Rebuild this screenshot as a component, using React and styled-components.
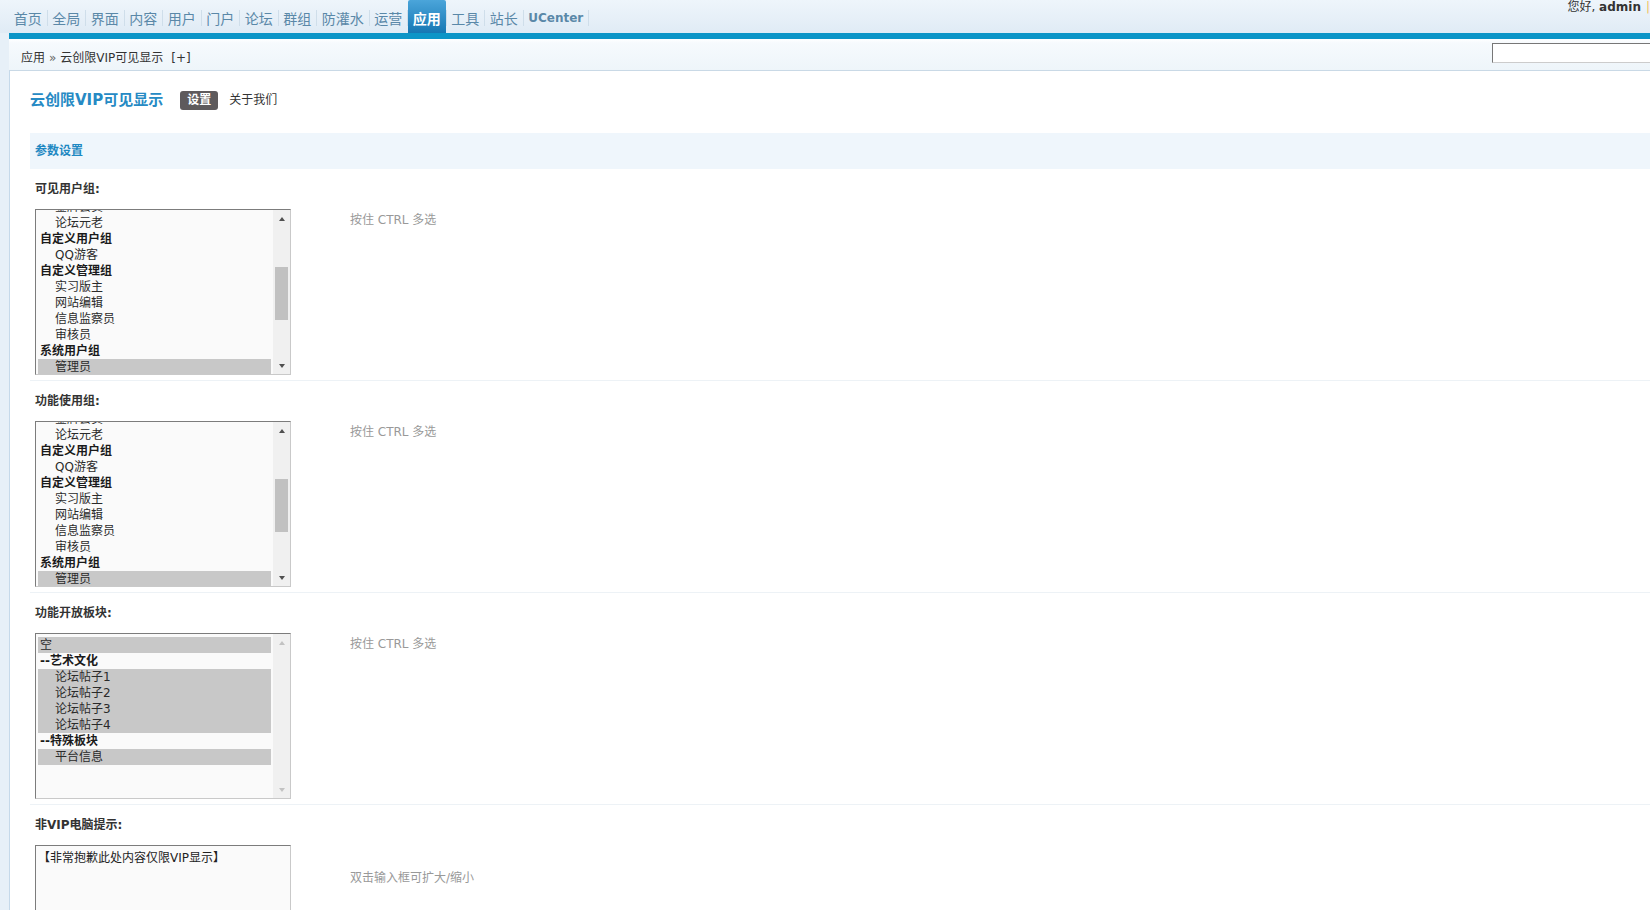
import React from 'react';
import styled, { createGlobalStyle, css } from 'styled-components';

const FONT = `"DejaVu Sans", "Noto Sans CJK SC", sans-serif`;
const CJK = `"Noto Sans CJK SC", "DejaVu Sans", sans-serif`;

const GlobalStyle = createGlobalStyle`
  html, body { margin: 0; padding: 0; }
  body {
    width: 1650px;
    height: 910px;
    overflow: hidden;
    background: #e7f0f8;
    font: 12px/1.5 ${FONT};
    color: #333;
  }
  *, *::before, *::after { box-sizing: border-box; }
`;

const Page = styled.div`
  display: flex;
  flex-direction: column;
  height: 910px;
  overflow: hidden;
`;

const Header = styled.header`
  display: flex;
  flex: none;
  height: 33px;
  padding-left: 9px;
  background: linear-gradient(to bottom, #eef5fb, #e0ebf5);
`;

const Nav = styled.nav`
  display: flex;
  height: 100%;
`;

const NavItem = styled.a`
  display: flex;
  align-items: center;
  height: 33px;
  padding: 2px 4.75px 0;
  font: 14px/1 ${CJK};
  color: #5a88a8;
  text-decoration: none;
  white-space: nowrap;
  ${(p) =>
    p.$latin &&
    css`
      font: bold 12px/1 ${FONT};
    `}
  ${(p) =>
    p.$active &&
    css`
      background: linear-gradient(to bottom, #4ba5da, #1677b3);
      color: #fff;
      font-weight: bold;
      border-radius: 2px 2px 0 0;
    `}
`;

const NavSep = styled.span`
  width: 1px;
  height: 16px;
  align-self: center;
  margin-top: 3px;
  background: #cfdeea;
`;

const UserInfo = styled.div`
  margin-left: auto;
  line-height: 14px;
  white-space: nowrap;
  color: #333;
  b { font-weight: bold; }
`;

const Pipe = styled.span`
  color: #f2c15b;
  margin-left: 5px;
`;

const Frame = styled.div`
  flex: 1;
  min-height: 0;
  margin-left: 9px;
  display: flex;
  flex-direction: column;
`;

const BlueBar = styled.div`
  flex: none;
  height: 6px;
  background: #0c95c7;
`;

const Crumbs = styled.div`
  flex: none;
  display: flex;
  align-items: flex-start;
  height: 32px;
  padding: 3px 0 0 12px;
  background: linear-gradient(to bottom, #ffffff 0, #f6fafd 4px, #eef5fa 100%);
  border-bottom: 1px solid #c9d9e6;
`;

const CrumbText = styled.div`
  line-height: 28px;
  padding-top: 2px;
  white-space: nowrap;
  color: #333;
`;

const Raquo = styled.span`
  color: #666;
  margin: 0 4px;
`;

const Expand = styled.span`
  margin-left: 8px;
  color: #333;
`;

const SearchInput = styled.input`
  margin: 1px -12px 0 auto;
  width: 170px;
  height: 20px;
  padding: 0 3px;
  border: 1px solid;
  border-color: #777 #ccc #ccc #777;
  background: #fff;
  outline: none;
`;

const Main = styled.main`
  flex: 1;
  min-height: 0;
  overflow: hidden;
  background: #fff;
  border-left: 1px solid #c5d9ea;
  padding-left: 20px;
`;

const TitleRow = styled.div`
  display: flex;
  align-items: center;
  height: 20px;
  margin-top: 19px;
`;

const Title = styled.h3`
  margin: 0 17px 0 0;
  font: bold 15px/20px ${FONT};
  color: #268ac4;
  white-space: nowrap;
`;

const Pill = styled.span`
  height: 19px;
  line-height: 19px;
  padding: 0 7px;
  background: #5e5a5c;
  color: #fff;
  font-weight: bold;
  border-radius: 3px;
  margin-right: 11px;
`;

const TabLink = styled.span`
  color: #333;
`;

const SectionHead = styled.div`
  margin-top: 23px;
  height: 36px;
  line-height: 36px;
  padding-left: 5px;
  background: #eff6fc;
  color: #1e88c2;
  font-weight: bold;
`;

const Row = styled.div`
  border-bottom: ${(p) => (p.$last ? 'none' : '1px solid #edf2f6')};
`;

const Label = styled.div`
  padding: 11px 5px 10px;
  line-height: 19px;
  font-weight: bold;
  color: #333;
`;

const Ctrl = styled.div`
  display: grid;
  grid-template-columns: 315px 1fr;
  padding: 0 0 5px 5px;
  align-items: ${(p) => (p.$middle ? 'center' : 'start')};
`;

const Tip = styled.div`
  color: #999;
  line-height: 18px;
  padding-top: ${(p) => (p.$middle ? 0 : 2)}px;
`;

const Box = styled.div`
  display: flex;
  width: 256px;
  height: 166px;
  border: 1px solid;
  border-color: #7c7c7c #c9c9c9 #c9c9c9 #7c7c7c;
  background: #fafafa;
  overflow: hidden;
`;

const Viewport = styled.div`
  flex: 1;
  min-width: 0;
  overflow: hidden;
  padding: 3px 2px 0;
`;

const Options = styled.div`
  margin-top: ${(p) => p.$offset}px;
`;

const Opt = styled.div`
  height: 16px;
  line-height: 16px;
  white-space: nowrap;
  padding-left: ${(p) => (p.$indent ? 17 : 2)}px;
  font-weight: ${(p) => (p.$group ? 'bold' : 'normal')};
  color: ${(p) => (p.$group ? '#1a1a1a' : '#2a2a2a')};
  background: ${(p) => (p.$selected ? '#c8c8c8' : 'transparent')};
`;

const Scroll = styled.div`
  flex: none;
  width: 17px;
  display: flex;
  flex-direction: column;
  background: #f0f0f0;
`;

const ArrowBtn = styled.div`
  flex: none;
  height: 17px;
  display: flex;
  align-items: center;
  justify-content: center;
  &::before {
    content: '';
    border-left: 3.5px solid transparent;
    border-right: 3.5px solid transparent;
    ${(p) =>
      p.$dir === 'up'
        ? css`border-bottom: 4px solid ${p.$disabled ? '#c2c2c2' : '#505050'};`
        : css`border-top: 4px solid ${p.$disabled ? '#c2c2c2' : '#505050'};`}
  }
`;

const Track = styled.div`
  flex: 1;
  padding: 0 2px;
`;

const Thumb = styled.div`
  margin-top: ${(p) => p.$top}px;
  height: ${(p) => p.$h}px;
  background: #c1c1c1;
`;

const Textarea = styled.textarea`
  display: block;
  width: 256px;
  height: 66px;
  margin: 0;
  padding: 3px 2px;
  border: 1px solid;
  border-color: #7c7c7c #c9c9c9 #c9c9c9 #7c7c7c;
  background: #fafafa;
  font: 12px/18px ${FONT};
  color: #222;
  resize: none;
  outline: none;
  overflow: hidden;
`;

const NAV = ['首页', '全局', '界面', '内容', '用户', '门户', '论坛', '群组', '防灌水', '运营', '应用', '工具', '站长', 'UCenter'];

const GROUPS = [
  { t: '金牌会员', indent: true },
  { t: '论坛元老', indent: true },
  { t: '自定义用户组', group: true },
  { t: 'QQ游客', indent: true },
  { t: '自定义管理组', group: true },
  { t: '实习版主', indent: true },
  { t: '网站编辑', indent: true },
  { t: '信息监察员', indent: true },
  { t: '审核员', indent: true },
  { t: '系统用户组', group: true },
  { t: '管理员', indent: true, selected: true },
  { t: '超级版主', indent: true },
];

const FORUMS = [
  { t: '空', selected: true },
  { t: '--艺术文化', group: true },
  { t: '论坛帖子1', indent: true, selected: true },
  { t: '论坛帖子2', indent: true, selected: true },
  { t: '论坛帖子3', indent: true, selected: true },
  { t: '论坛帖子4', indent: true, selected: true },
  { t: '--特殊板块', group: true },
  { t: '平台信息', indent: true, selected: true },
];

function ListBox({ items, offset = 0, thumb }) {
  return (
    <Box>
      <Viewport>
        <Options $offset={offset}>
          {items.map((it, i) => (
            <Opt key={i} $indent={it.indent} $group={it.group} $selected={it.selected}>
              {it.t}
            </Opt>
          ))}
        </Options>
      </Viewport>
      <Scroll>
        <ArrowBtn $dir="up" $disabled={!thumb} />
        <Track>{thumb && <Thumb $top={thumb.top} $h={thumb.h} />}</Track>
        <ArrowBtn $dir="down" $disabled={!thumb} />
      </Scroll>
    </Box>
  );
}

function Field({ label, children, tip, middle, last }) {
  return (
    <Row $last={last}>
      <Label>{label}</Label>
      <Ctrl $middle={middle}>
        <div>{children}</div>
        <Tip $middle={middle}>{tip}</Tip>
      </Ctrl>
    </Row>
  );
}

export default function App() {
  return (
    <>
      <GlobalStyle />
      <Page>
        <Header>
          <Nav>
            {NAV.map((n) => (
              <React.Fragment key={n}>
                <NavItem href="#" $active={n === '应用'} $latin={n === 'UCenter'}>
                  {n}
                </NavItem>
                <NavSep />
              </React.Fragment>
            ))}
          </Nav>
          <UserInfo>
            您好, <b>admin</b>
            <Pipe>|</Pipe>
          </UserInfo>
        </Header>
        <Frame>
          <BlueBar />
          <Crumbs>
            <CrumbText>
              应用<Raquo>»</Raquo>云创限VIP可见显示<Expand>[+]</Expand>
            </CrumbText>
            <SearchInput type="text" />
          </Crumbs>
          <Main>
            <TitleRow>
              <Title>云创限VIP可见显示</Title>
              <Pill>设置</Pill>
              <TabLink>关于我们</TabLink>
            </TitleRow>
            <SectionHead>参数设置</SectionHead>
            <Field label="可见用户组:" tip="按住 CTRL 多选">
              <ListBox items={GROUPS} offset={-14} thumb={{ top: 40, h: 53 }} />
            </Field>
            <Field label="功能使用组:" tip="按住 CTRL 多选">
              <ListBox items={GROUPS} offset={-14} thumb={{ top: 40, h: 53 }} />
            </Field>
            <Field label="功能开放板块:" tip="按住 CTRL 多选">
              <ListBox items={FORUMS} offset={0} />
            </Field>
            <Field label="非VIP电脑提示:" tip="双击输入框可扩大/缩小" middle last>
              <Textarea readOnly defaultValue="【非常抱歉此处内容仅限VIP显示】" />
            </Field>
          </Main>
        </Frame>
      </Page>
    </>
  );
}
